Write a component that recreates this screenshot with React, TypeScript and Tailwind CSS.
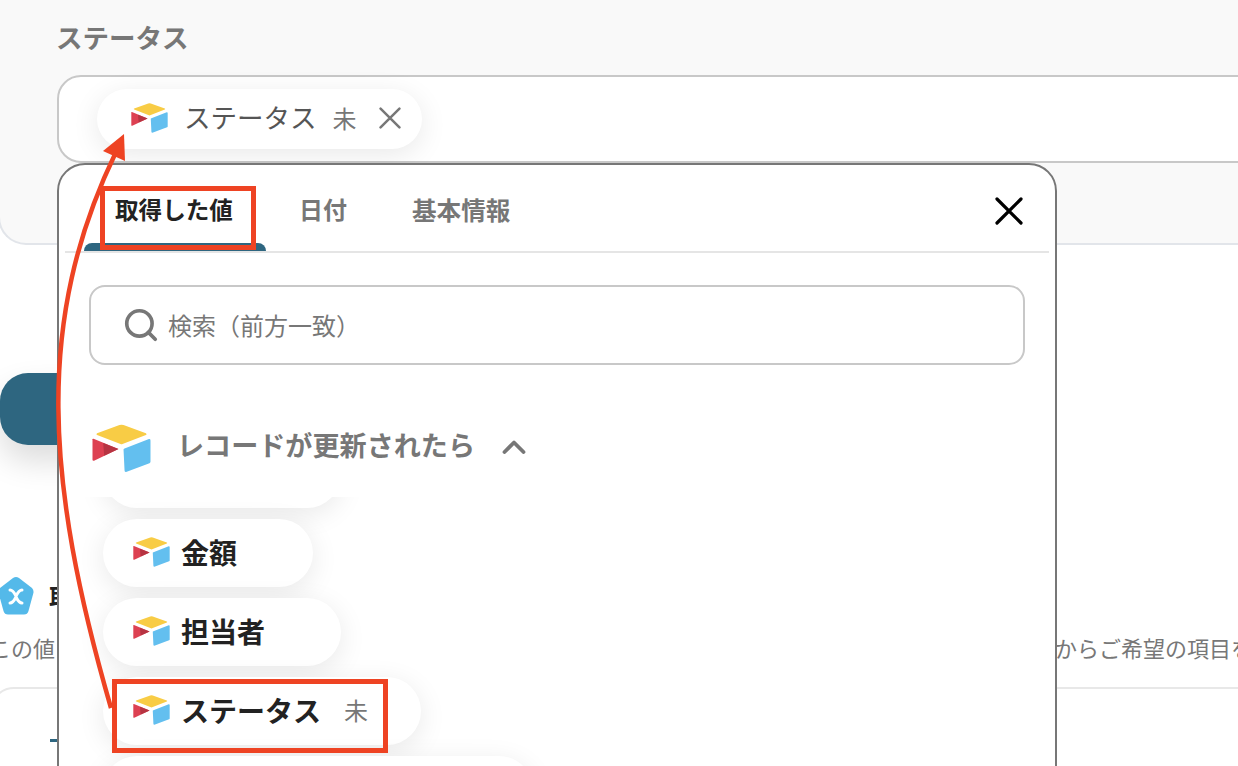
import { Search } from 'lucide-react';

const jp = "font-['Noto_Sans_CJK_JP','Noto_Sans',sans-serif]";

const AirtableLogo = ({ className }: { className: string }) => (
  <svg viewBox="0 0 58 48" className={className}>
    <path d="M5 10 L27 2 Q29 1.4 31 2 L53 10 Q54.5 11 53 11.6 L30 20.5 Q29 21 28 20.5 L5 11.6 Q3.5 11 5 10 Z" fill="#f8cc45" />
    <path d="M32 25 L56 15.6 Q57.5 15.4 57.5 17 L57.5 38 Q57.5 39 56.5 39.4 L33.5 48 Q32 48 32 46.5 L31 26 Q31 25.4 32 25 Z" fill="#63bfef" />
    <path d="M1.5 15.5 L26 25.5 L2 37 Q0.5 37.3 0.5 36 L0.5 16 Q0.5 15.3 1.5 15.5 Z" fill="#dd4152" />
    <path d="M11 19.6 L26 25.5 L12 32 Z" fill="#b63442" />
  </svg>
);

const CloseIcon = ({ className, color, width }: { className: string; color: string; width: number }) => (
  <svg viewBox="0 0 28 28" className={className} fill="none" stroke={color} strokeWidth={width} strokeLinecap="round">
    <path d="M2 2 L26 26 M26 2 L2 26" />
  </svg>
);

const ValueChip = ({ label, tag, className }: { label?: string; tag?: string; className: string }) => (
  <div className={`flex h-[68px] items-center gap-[11px] rounded-[34px] bg-white pb-[3px] pl-[30px] shadow-[0_6px_28px_rgba(0,0,0,0.09)] ${className}`}>
    {label && <AirtableLogo className="h-[31px] w-[37px] shrink-0" />}
    {label && <span className="text-[28px] leading-none font-bold text-[#222]">{label}</span>}
    {tag && <span className="ml-[12px] text-[24px] leading-none text-[#777]">{tag}</span>}
  </div>
);

export default function App() {
  return (
    <div className={`relative h-[766px] w-[1238px] overflow-hidden bg-white ${jp}`}>
      {/* page behind the popover */}
      <section className="-ml-[2px] h-[245px] w-[1400px] rounded-bl-[28px] border-b-2 border-l-2 border-[#e2e5ea] bg-[#f9f9f9] pl-[57px]">
        <h2 className="-ml-[1px] pt-[18px] text-[26.5px] leading-[38px] font-bold text-[#777]">ステータス</h2>
        <div className="mt-[19px] h-[88px] rounded-l-[24px] border-2 border-[#c8c8c8] bg-white pt-[12px] pl-[38px]">
          <div className="flex h-[60px] w-[325px] items-center rounded-[30px] bg-white pb-[3px] pl-[34px] shadow-[0_6px_28px_rgba(0,0,0,0.09)]">
            <AirtableLogo className="h-[31px] w-[37px] shrink-0" />
            <span className="ml-[16px] text-[26.5px] leading-none text-[#555]">ステータス</span>
            <span className="ml-[16px] text-[24px] leading-none text-[#777]">未</span>
            <CloseIcon className="ml-[22px] h-[22px] w-[22px]" color="#777" width={3.2} />
          </div>
        </div>
      </section>

      <div className="mt-[128px] h-[72px] w-[240px] rounded-[28px] bg-[#2e6680] shadow-[0_16px_32px_rgba(0,0,0,0.14)]" />

      <div className="mt-[131px] flex h-[40px] items-center gap-[15px]">
        <svg viewBox="0 0 36 40" className="-ml-[2px] h-[40px] w-[36px]">
          <path d="M15 2 Q18 0 21 2 L34 12 Q36 14 35.4 17 L30.5 35 Q29.5 38.5 26 38.5 L10 38.5 Q6.5 38.5 5.5 35 L0.6 17 Q0 14 2 12 Z" fill="#54b9e9" />
          <path d="M12 14 Q15 14 18 20 Q21 14 24 14 M12 27 Q15 27 18 21 Q21 27 24 27" fill="none" stroke="#fff" strokeWidth="3" strokeLinecap="round" />
        </svg>
        <span className="text-[24px] leading-none font-bold text-[#222]">取得した値</span>
      </div>

      <div className="-ml-[11px] mt-[15px] flex w-[1400px] text-[22px] leading-[32px] whitespace-nowrap text-[#777]">
        <span className="w-[1066px] shrink-0">この値</span>
        <span>からご希望の項目を選択してください</span>
      </div>

      <div className="-ml-[10px] mt-[24px] h-[100px] w-[1400px] rounded-[24px] border-2 border-[#e8e8e8] pt-[50px] pl-[58px]">
        <div className="h-[3px] w-[12px] bg-[#2e6680]" />
      </div>

      {/* value picker popover */}
      <div className="absolute top-[163px] left-[57px] isolate h-[700px] w-[1000px] overflow-hidden rounded-t-[28px] border-2 border-[#777] bg-white">
        <div className="mx-[6px] flex h-[88px] border-b-2 border-[#e5e5e5] pl-[19px]">
          <div className="relative pt-[27px] pr-[35px] pl-[31px] text-[23.6px] leading-[34px] font-bold text-[#222]">
            取得した値
            <div className="absolute right-[2px] bottom-0 left-0 h-[8px] rounded-t-[8px] bg-[#2e6680]" />
          </div>
          <div className="pt-[27px] pr-[32px] pl-[31px] text-[24px] leading-[34px] font-bold text-[#777]">日付</div>
          <div className="px-[33px] pt-[27px] text-[24.6px] leading-[34px] font-bold text-[#777]">基本情報</div>
          <CloseIcon className="mt-[32px] mr-[26px] ml-auto h-[28px] w-[28px]" color="#000" width={3.2} />
        </div>

        <div className="relative z-10 bg-white">
          <div className="mt-[32px] mr-[30px] ml-[30px] flex h-[80px] items-center gap-[8px] rounded-[16px] border-2 border-[#c8c8c8] pl-[31px]">
            <Search size={38} strokeWidth={2.3} color="#777" className="shrink-0" />
            <span className="text-[24px] leading-none text-[#777]">検索（前方一致）</span>
          </div>
          <div className="flex h-[132px] items-center pt-[32px] pl-[33px]">
            <AirtableLogo className="h-[49px] w-[59px] shrink-0" />
            <span className="mb-[5px] ml-[26px] text-[27.1px] leading-none font-bold text-[#777]">レコードが更新されたら</span>
            <svg viewBox="0 0 24 14" className="ml-[27px] h-[14px] w-[24px]" fill="none" stroke="#777" strokeWidth="3.8" strokeLinecap="round" strokeLinejoin="round">
              <path d="M2.5 12 L12 2.5 L21.5 12" />
            </svg>
          </div>
        </div>

        <div className="-mt-[57px] flex flex-col gap-[11px] pl-[44px]">
          <ValueChip className="w-[238px]" />
          <ValueChip label="金額" className="w-[210px]" />
          <ValueChip label="担当者" className="w-[238px]" />
          <ValueChip label="ステータス" tag="未" className="w-[318px]" />
          <ValueChip className="w-[430px]" />
        </div>
      </div>

      {/* annotation overlay */}
      <div className="absolute top-[186px] left-[100px] h-[64px] w-[156px] border-[5px] border-[#ee4323]" />
      <div className="absolute top-[679px] left-[112px] h-[74px] w-[276px] border-[5px] border-[#ee4323]" />
      <svg viewBox="0 0 1238 766" className="pointer-events-none absolute inset-0 h-[766px] w-[1238px]" fill="none">
        <path d="M111 708 C 45 480, 35 320, 116 152" stroke="#ee4323" strokeWidth="4.5" />
        <path d="M124 134 L103 151 L125 161 Z" fill="#ee4323" />
      </svg>
    </div>
  );
}
